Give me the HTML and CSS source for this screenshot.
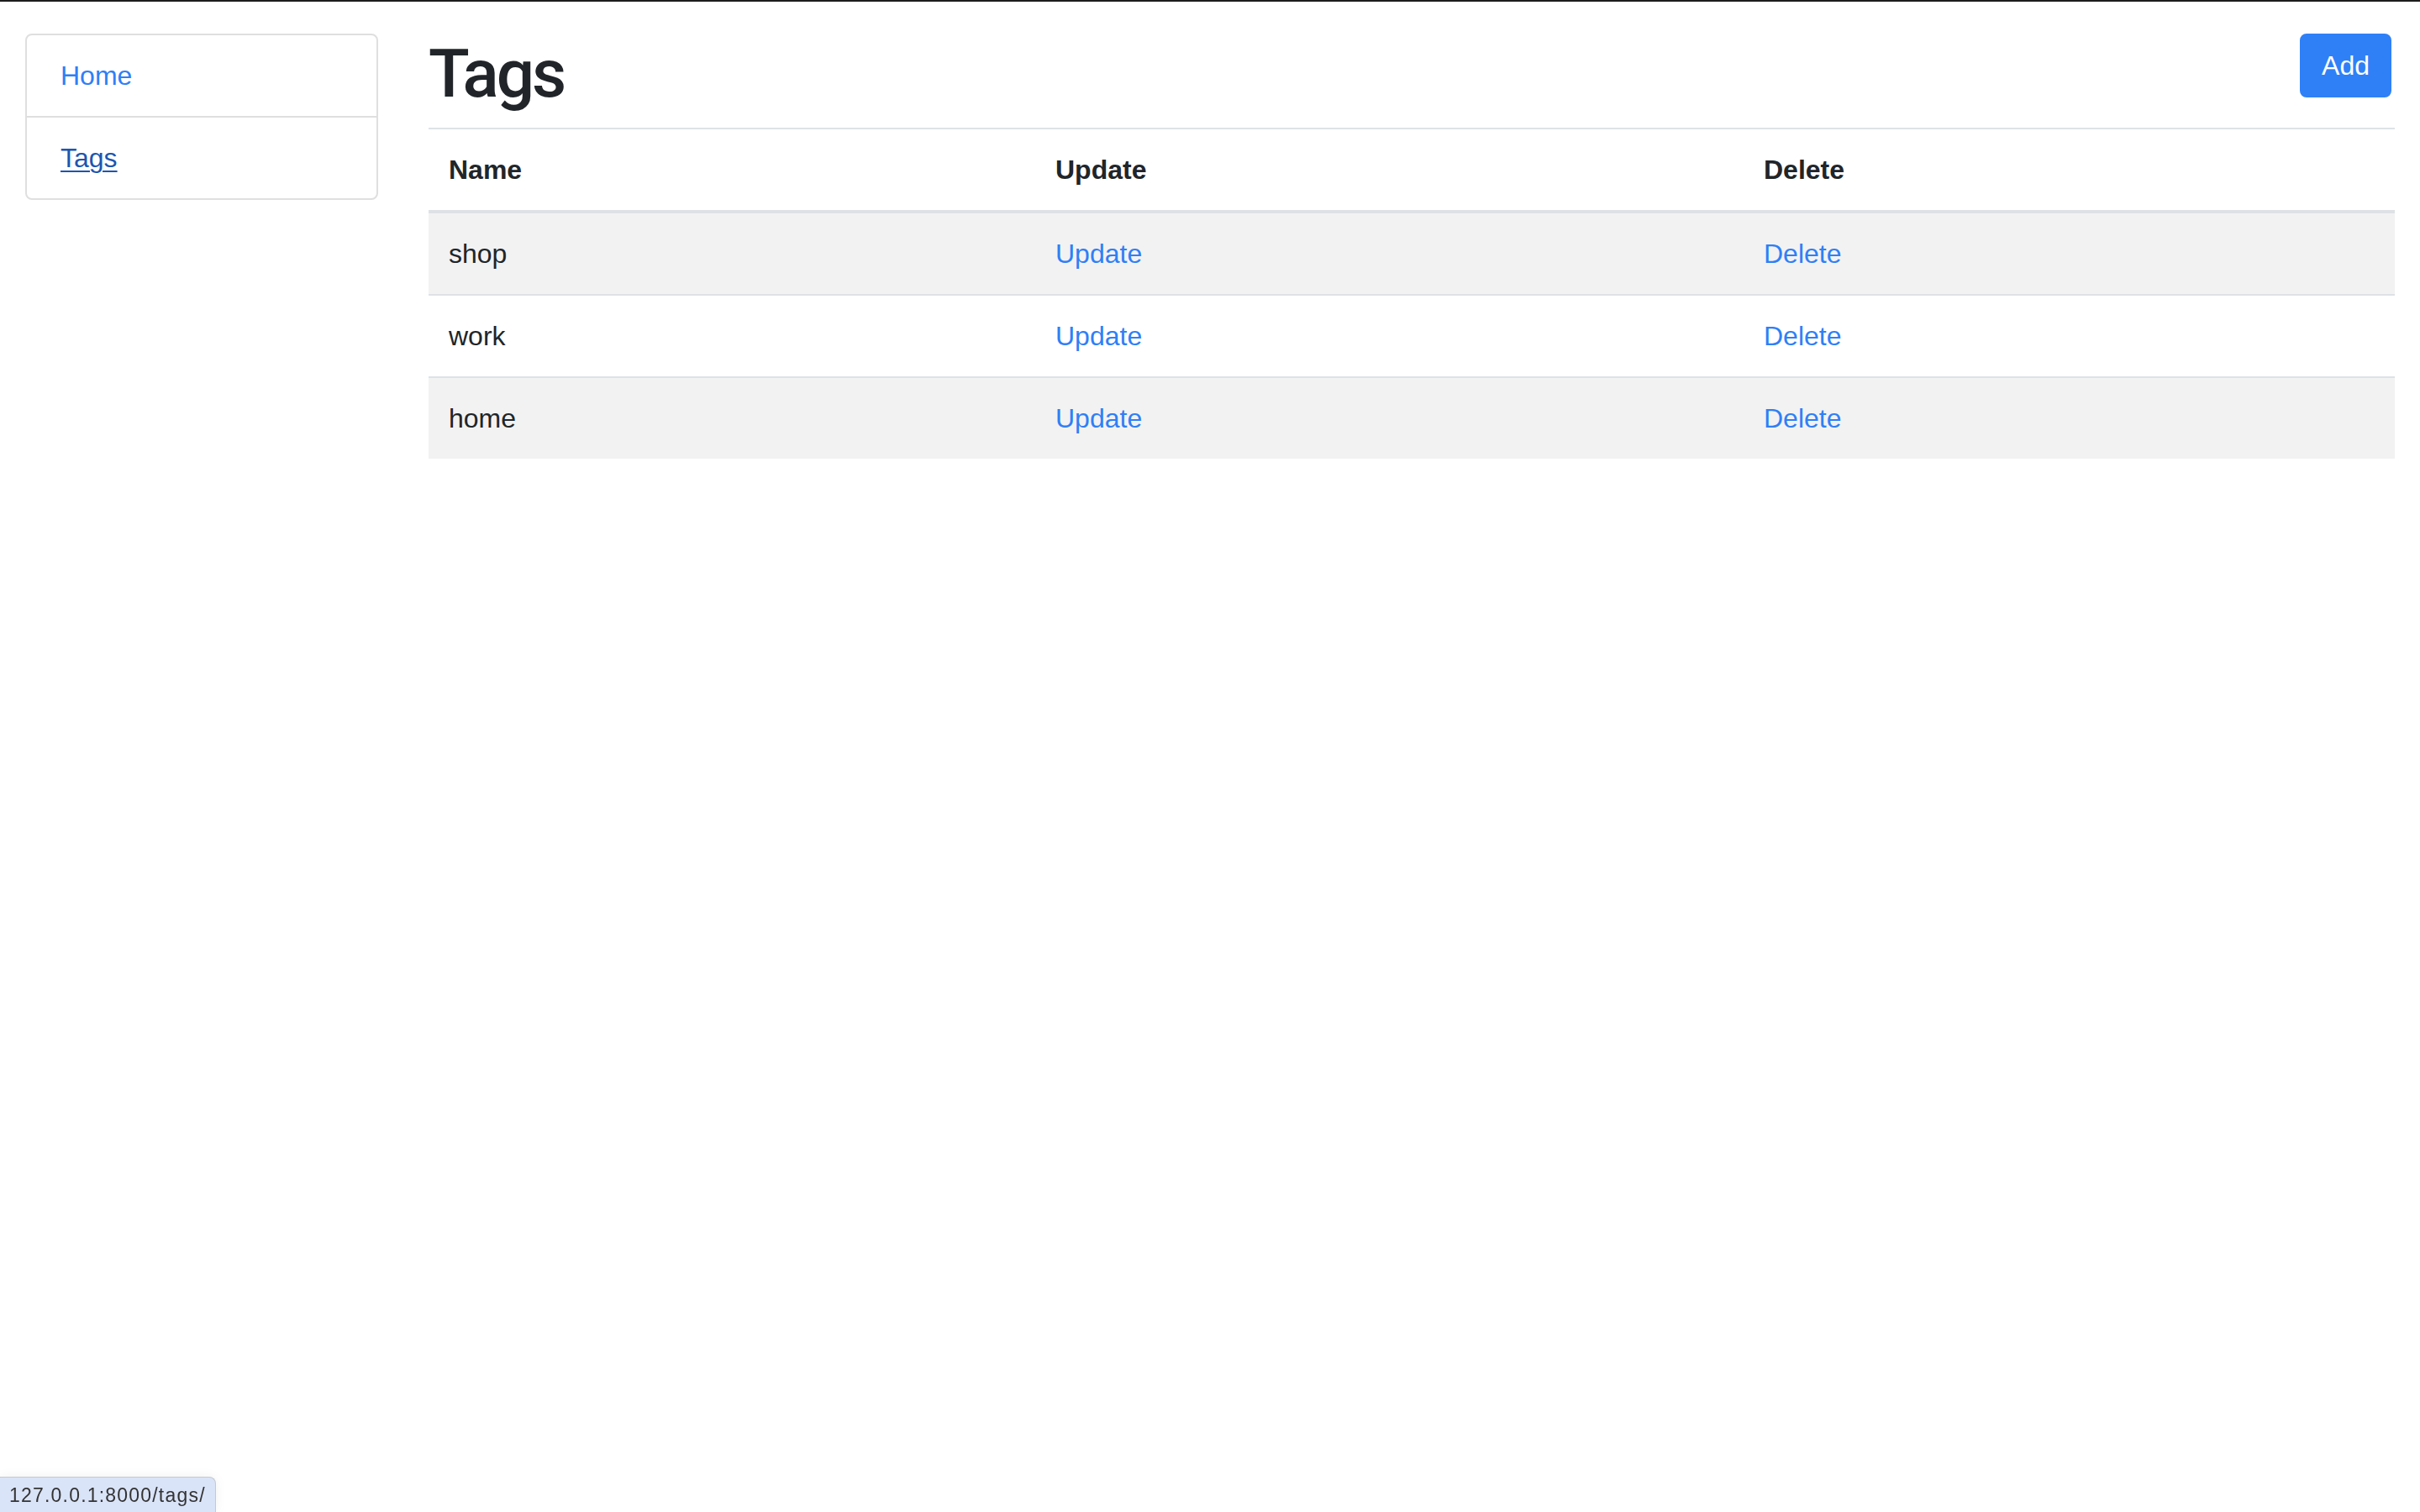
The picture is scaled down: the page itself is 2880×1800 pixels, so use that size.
FILE: index.html
```html
<!DOCTYPE html>
<html lang="en">
<head>
<meta charset="utf-8">
<title>Tags</title>
<link rel="stylesheet" href="styles.css">
</head>
<body>
<div class="page">
  <aside class="sidebar">
    <nav class="list-group">
      <a class="list-item" href="#">Home</a>
      <a class="list-item active-hover" href="#">Tags</a>
    </nav>
  </aside>
  <main class="main">
    <div class="header">
      <h1 class="title">Tags</h1>
      <a class="btn-add" href="#">Add</a>
    </div>
    <table class="table">
      <thead>
        <tr>
          <th class="col-name">Name</th>
          <th class="col-update">Update</th>
          <th class="col-delete">Delete</th>
        </tr>
      </thead>
      <tbody>
        <tr>
          <td>shop</td>
          <td><a class="link" href="#">Update</a></td>
          <td><a class="link" href="#">Delete</a></td>
        </tr>
        <tr>
          <td>work</td>
          <td><a class="link" href="#">Update</a></td>
          <td><a class="link" href="#">Delete</a></td>
        </tr>
        <tr>
          <td>home</td>
          <td><a class="link" href="#">Update</a></td>
          <td><a class="link" href="#">Delete</a></td>
        </tr>
      </tbody>
    </table>
  </main>
</div>
<div class="status-bar">127.0.0.1:8000/tags/</div>
</body>
</html>
```
FILE: styles.css
```css
* {
  box-sizing: border-box;
}

html, body {
  margin: 0;
  padding: 0;
  background: #ffffff;
}

body {
  border-top: 2px solid #1c1c1c;
  font-family: "Liberation Sans", Arial, sans-serif;
  font-size: 32px;
  line-height: 48px;
  color: #212529;
  min-height: 1800px;
}

.page {
  display: flex;
  align-items: flex-start;
  padding-top: 38px;
}

.sidebar {
  width: 480px;
  flex: 0 0 480px;
  padding: 0 30px;
}

.list-group {
  display: flex;
  flex-direction: column;
  border: 2px solid #dfdfdf;
  border-radius: 8px;
}

.list-item {
  display: block;
  padding: 24px 40px;
  color: #2f7ff6;
  text-decoration: none;
}

.list-item + .list-item {
  border-top: 2px solid #dfdfdf;
}

.active-hover {
  color: #1d56b0;
  text-decoration: underline;
  text-decoration-thickness: 2px;
  text-underline-offset: 4px;
}

.main {
  flex: 1;
  padding: 0 30px;
}

.header {
  display: flex;
  justify-content: space-between;
  align-items: flex-start;
}

.title {
  margin: 0 0 16px 0;
  font-family: Roboto, "Liberation Sans", sans-serif;
  font-weight: 500;
  font-size: 80px;
  line-height: 96px;
  letter-spacing: -3px;
  color: #212529;
}

.btn-add {
  display: inline-block;
  margin-right: 4px;
  padding: 12px 24px;
  border: 2px solid #2f80f7;
  border-radius: 8px;
  background: #2f80f7;
  color: #ffffff;
  text-decoration: none;
  font-size: 32px;
  line-height: 48px;
}

.table {
  width: 100%;
  border-collapse: collapse;
}

.table th,
.table td {
  padding: 24px;
  text-align: left;
  vertical-align: top;
  border-top: 2px solid #dee2e6;
}

.table th {
  font-weight: bold;
  border-bottom: 4px solid #dee2e6;
}

.col-name {
  width: 722px;
}

.col-update {
  width: 843px;
}

.col-delete {
  width: 775px;
}

.table tbody tr:nth-child(odd) {
  background: #f2f2f2;
}

.link {
  color: #2f7ff6;
  text-decoration: none;
}

.status-bar {
  position: fixed;
  left: 0;
  bottom: 0;
  width: 257px;
  height: 42px;
  padding: 0 0 0 11px;
  background: #dae4f8;
  border: 1px solid #c4c9d2;
  border-left: none;
  border-bottom: none;
  border-top-right-radius: 8px;
  box-shadow: 0 0 14px rgba(0, 0, 0, 0.06);
  font-size: 23px;
  line-height: 42px;
  letter-spacing: 1.2px;
  white-space: nowrap;
  color: #333333;
}
```
